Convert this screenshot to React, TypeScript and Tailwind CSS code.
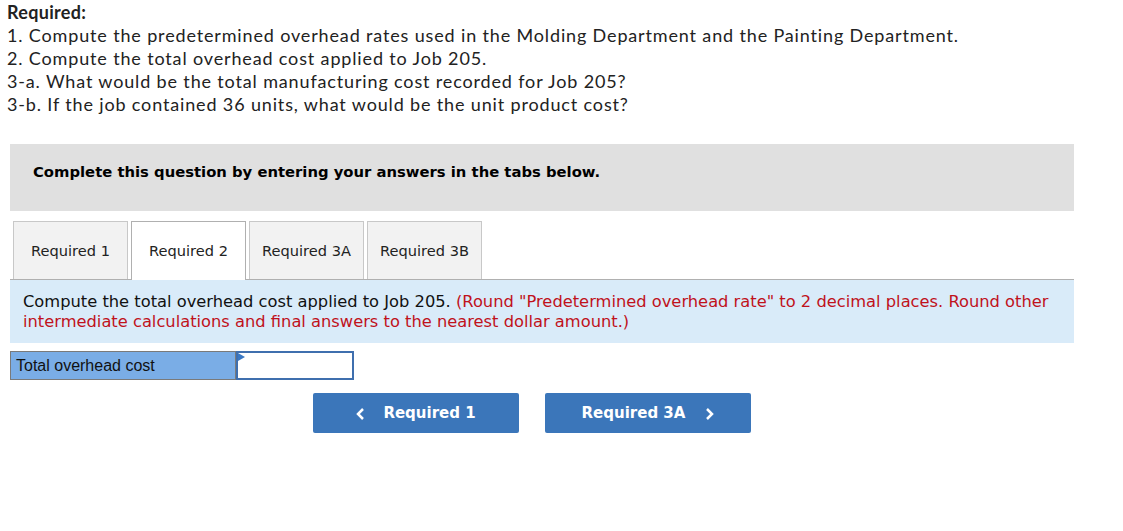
import React from "react";

const tabs = ["Required 1", "Required 2", "Required 3A", "Required 3B"];

export default function App() {
  const active = 1;

  return (
    <div className="w-[1123px] h-[531px] bg-white text-[#222]">
      <div className="pl-[7px] pt-[1px] [font-family:Lato,sans-serif] text-[18px] leading-[23px] tracking-[0.85px] text-[#222]">
        <div className="font-bold tracking-[0.3px]">Required:</div>
        <div>1. Compute the predetermined overhead rates used in the Molding Department and the Painting Department.</div>
        <div>2. Compute the total overhead cost applied to Job 205.</div>
        <div>3-a. What would be the total manufacturing cost recorded for Job 205?</div>
        <div>3-b. If the job contained 36 units, what would be the unit product cost?</div>
      </div>

      <div className="ml-[10px] mt-[28px] w-[1064px]">
        <div className="h-[67px] bg-[#e0e0e0] pl-[23px] pt-[19px] [font-family:'DejaVu_Sans',sans-serif] font-bold text-[14.8px] leading-[18px] text-black">
          Complete this question by entering your answers in the tabs below.
        </div>

        <div className="mt-[10px] flex items-end gap-[3px] pl-[3px] border-b border-[#b0b0b0] [font-family:'DejaVu_Sans',sans-serif] text-[14.6px] text-[#222]">
          {tabs.map((t, i) => (
            <div
              key={t}
              className={
                i === active
                  ? "h-[59px] -mb-px w-[115px] flex items-center justify-center bg-white border border-b-0 border-[#b0b0b0]"
                  : "h-[58px] w-[115px] flex items-center justify-center bg-[#f2f2f2] border border-b-0 border-[#c8c8c8]"
              }
            >
              {t}
            </div>
          ))}
        </div>

        <div className="bg-[#d9ebf9] h-[63px] pl-[13px] pr-[10px] pt-[12px] [font-family:'DejaVu_Sans',sans-serif] text-[16.3px] leading-[20px] text-[#111]">
          Compute the total overhead cost applied to Job 205.{" "}
          <span className="text-[#c0121c]">
            (Round "Predetermined overhead rate" to 2 decimal places. Round other intermediate calculations and final answers to the nearest dollar amount.)
          </span>
        </div>

        <div className="mt-[8px] flex h-[29px]">
          <div className="w-[226px] bg-[#7aade6] border border-[#7a7a7a] flex items-center pl-[5px] [font-family:'Liberation_Sans',Arial,sans-serif] text-[16px] text-[#111]">
            Total overhead cost
          </div>
          <div className="relative w-[118px] bg-white border-2 border-[#3f6fae]">
            <svg className="absolute left-0 top-0" width="8" height="10" viewBox="0 0 8 10">
              <polygon points="0,0 7,4 0,8" fill="#3a78c4" />
            </svg>
          </div>
        </div>

        <div className="mt-[13px] flex gap-[26px] pl-[303px] [font-family:'DejaVu_Sans',sans-serif] font-bold text-[15px] text-white">
          <button className="w-[206px] h-[40px] rounded-[2px] bg-[#3b76ba] flex items-center justify-center gap-[17px] pt-px">
            <svg width="10" height="14" viewBox="0 0 10 14">
              <polyline points="7,2 2,7 7,12" fill="none" stroke="white" strokeWidth="2.5" />
            </svg>
            <span>Required 1</span>
          </button>
          <button className="w-[206px] h-[40px] rounded-[2px] bg-[#3b76ba] flex items-center justify-center gap-[19px] pt-px">
            <span>Required 3A</span>
            <svg width="10" height="14" viewBox="0 0 10 14">
              <polyline points="3,2 8,7 3,12" fill="none" stroke="white" strokeWidth="2.5" />
            </svg>
          </button>
        </div>
      </div>
    </div>
  );
}
